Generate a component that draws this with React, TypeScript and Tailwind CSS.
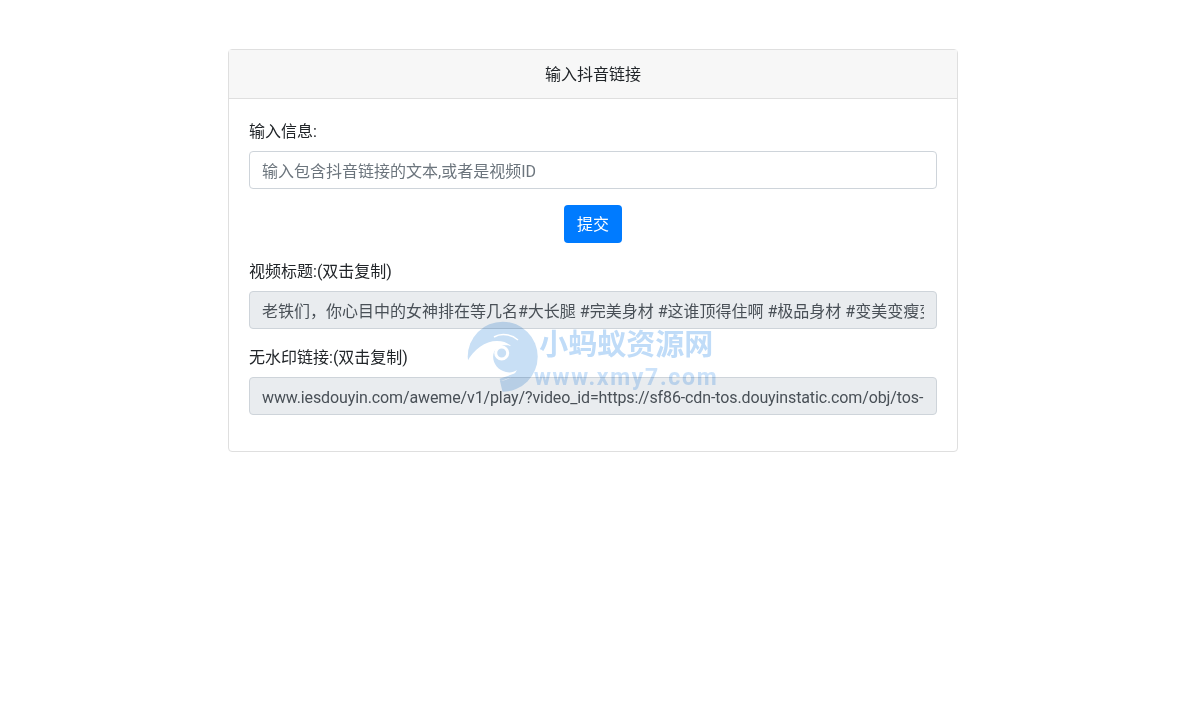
const fontStack = { fontFamily: 'Roboto, "Noto Sans CJK SC", sans-serif' }

function WatermarkLogo() {
  return (
    <svg width="72" height="74" viewBox="0 0 72 74" className="block">
      <circle cx="35.7" cy="36.7" r="35" fill="#c8dff5" />
      <path d="M0 42C7 29 18 21 30 21C36 21 41 23 44 26C37 24 30 26 27 32C24 40 29 50 39 52C43 53 47 52 50 50C46 57 40 61 33 61L36 74H6Z" fill="#ffffff" />
      <circle cx="34.7" cy="33" r="6" fill="#c8dff5" stroke="#ffffff" strokeWidth="3" />
      <path d="M27 17C34 13 44 14 51 20" fill="none" stroke="#ffffff" strokeWidth="1.5" />
      <path d="M33 60L50 54M35 65L50 60M37 70L48 66" fill="none" stroke="#c8dff5" strokeWidth="2.5" />
    </svg>
  )
}

export default function App() {
  return (
    <div className="min-h-[715px] bg-white text-[16px] leading-6 text-[#212529]" style={fontStack}>
      <div className="relative ml-[228px] w-[730px] pt-[49px]">
        <div className="rounded border border-[#dfdfdf] bg-white">
          <div className="h-[49px] border-b border-[#dfdfdf] bg-[#f7f7f7] text-center leading-[49px]">输入抖音链接</div>
          <div className="px-5 pt-5 pb-5">
            <label className="mb-2 block h-6 leading-[26px]">输入信息:</label>
            <input
              placeholder="输入包含抖音链接的文本,或者是视频ID"
              className="mb-4 block h-[38px] w-full rounded border border-[#ced4da] bg-white px-3 pt-[2px] text-[#495057] outline-none placeholder:text-[#6c757d]"
            />
            <div className="mb-4 flex justify-center">
              <button className="h-[38px] w-[58px] rounded bg-[#007bff] pt-[1px] text-white">提交</button>
            </div>
            <label className="mb-2 block h-6 leading-[26px]">视频标题:(双击复制)</label>
            <input
              readOnly
              value="老铁们，你心目中的女神排在等几名#大长腿 #完美身材 #这谁顶得住啊 #极品身材 #变美变瘦变好看"
              className="mb-4 block h-[38px] w-full rounded border border-[#ced4da] bg-[#e9ecef] px-3 text-[#495057] outline-none"
            />
            <label className="mb-2 block h-6 leading-[26px]">无水印链接:(双击复制)</label>
            <input
              readOnly
              value="www.iesdouyin.com/aweme/v1/play/?video_id=https://sf86-cdn-tos.douyinstatic.com/obj/tos-cn-ve-15/video"
              className="mb-4 block h-[38px] w-full rounded border border-[#ced4da] bg-[#e9ecef] px-3 pt-[2px] tracking-[-0.12px] text-[#495057] outline-none"
            />
          </div>
        </div>
        <div className="pointer-events-none absolute top-[320px] left-[239px] flex items-start mix-blend-multiply">
          <WatermarkLogo />
          <div className="-ml-[5px] flex flex-col items-center">
            <span className="pt-[4px] text-[29px] leading-[42px] font-bold text-[#c0dcf8]">小蚂蚁资源网</span>
            <span className="text-[23px] leading-[24px] font-bold tracking-[1.7px] text-[#cbe2fa]">www.xmy7.com</span>
          </div>
        </div>
      </div>
    </div>
  )
}
